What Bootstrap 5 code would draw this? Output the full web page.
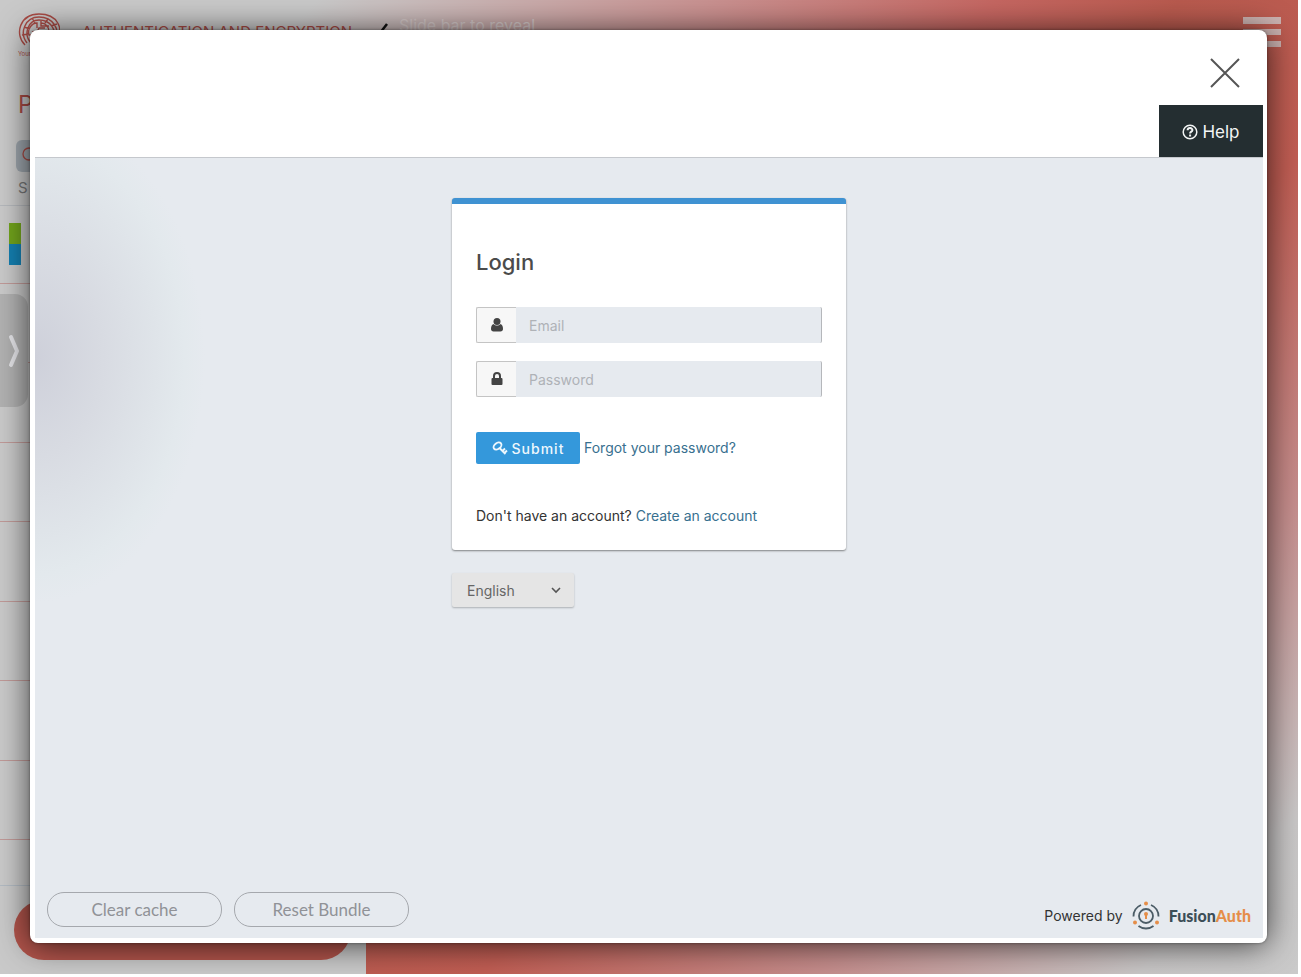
<!DOCTYPE html>
<html lang="en">
<head>
<meta charset="utf-8">
<meta name="viewport" content="width=device-width, initial-scale=1">
<title>Login</title>
<link href="https://cdn.jsdelivr.net/npm/bootstrap@5.3.0/dist/css/bootstrap.min.css" rel="stylesheet">
<style>
body { font-family: Inter, "Liberation Sans", sans-serif; font-size: 14px; line-height: 20px; color: #333; background: #fff; }
.app-shell { display: grid; min-height: 100vh; border: solid #fff; border-width: 0 3px 3px 0; overflow: hidden;
  background: linear-gradient(135deg, #c9c9c9 14%, #c98f8e 32%, #c56661 44%, #b85a4e 52%, #c05d53 64%, #c58d8c 79%, #c8c6c6 93%, #cacaca 100%); }
.app-shell > * { grid-area: 1 / 1; min-width: 0; }

/* Page behind the dialog */
.behind { display: flex; }
.side-panel { width: 366px; flex-shrink: 0; display: flex; flex-direction: column; }
.side-top { height: 206px; padding: 12px 0 0 18px; border-bottom: 1px solid #b5b8bc; }
.side-body { background: #c9c9c9; flex-grow: 1; }
.brand-red { color: #a94b45; }
.brand-mark { width: 42px; }
.tiny-text { font-size: 6px; line-height: 8px; }
.brand-title { font-size: 15px; line-height: 20px; margin: 10px 0 0 22px; }
.panel-heading { font-size: 24px; line-height: 30px; margin: 32px 0 20px; }
.search-stub { height: 32px; width: 300px; margin-left: -2px; border-radius: 6px; background: #9da5ac; padding: 5px 6px; }
.side-caption { font-size: 15px; color: #777; margin-top: 6px; }
.side-rows > div { height: 80px; border-bottom: 1px solid #c09a98; }
.side-rows > div:first-child { height: 78px; padding: 17px 0 0 9px; }
.side-rows > div:nth-child(even) { height: 79px; }
.side-rows > div:last-child { height: 46px; border-color: #b2bac2; }
.swatch { width: 12px; height: 42px; background: linear-gradient(#71a31c 50%, #147fb0 50%); }
.pill { height: 60px; margin: 14px 15px 14px 14px; border-radius: 30px; background: #b1544b; }
.stage-top { padding: 15px 17px 0 13px; height: 60px; color: #d6caca; font-size: 16px; }
.burger { width: 38px; height: 32px; }
.drawer-tab { align-self: start; width: 28px; height: 113px; margin-top: 294px; border: 0; border-radius: 0 13px 13px 0; background: #b1b1b1; z-index: 0; }

/* Dialog */
.login-window { z-index: 1; margin: 30px 31px 31px 30px; background: #fff; border-radius: 8px; padding: 0 4px 5px 5px;
  box-shadow: 0 2px 32px rgba(0,0,0,.7), 0 0 3px rgba(0,0,0,.4); }
.close-row { height: 75px; padding-right: 22px; padding-top: 10px; }
.plain-btn { border: 0; background: none; padding: 0; line-height: 0; }
.help-row { height: 53px; border-bottom: 1px solid #c5c8cd; }
.help-link { width: 104px; padding-top: 1px; background: #242e31; color: #f3f5f5; font-size: 17px; }
.login-stage { background: radial-gradient(ellipse 170px 245px at 0 200px, #ced0da 0%, #d8dbe2 40%, #e3e9ed 88%, #e6eaef 100%) #e6eaef; }
.login-column { width: 394px; max-width: 100%; margin: 40px auto 0; }
.login-card { border: 0; border-top: 6px solid #3f92d2; border-radius: 3px; padding: 43px 24px 24px; box-shadow: 0 1px 2px rgba(0,0,0,.45); }
.login-card h1 { font-size: 22px; line-height: 30px; font-weight: 500; color: #4b4b4b; margin-bottom: 30px; }
.field-row { height: 36px; margin-bottom: 18px; }
.field-row .input-group-text { width: 41px; padding: 0; justify-content: center; background: #f7f7f7; border: 1px solid #c4c4c4; border-right: 0; border-radius: 2px 0 0 2px; color: #444; }
.field-row .form-control { font-size: 14px; padding: 0 13px; background: #e6eaef; border: 0; border-right: 1px solid #b5b7bb; border-radius: 0 2px 2px 0; }
.field-row .form-control::placeholder { color: #afb2b7; }
.actions { margin: 35px 0 42px; }
.submit-btn { width: 104px; height: 32px; padding: 0; font-size: 14px; font-weight: 500; letter-spacing: 1px; background: #3498db; color: #eef7fd; border: 0; border-radius: 2px; }
.actions a, .signup a { color: #38708f; text-decoration: none; }
.lang-select { width: 122px; height: 34px; margin-top: 23px; padding: 0 15px; font-size: 14px; color: #666; background-color: #e5e5e5; border: 0; border-radius: 2px; box-shadow: 0 1px 2px rgba(0,0,0,.25);
  background-image: url("data:image/svg+xml,%3Csvg xmlns='http://www.w3.org/2000/svg' viewBox='0 0 12 12'%3E%3Cpath d='M2 4l4 4 4-4' fill='none' stroke='%23555' stroke-width='1.6'/%3E%3C/svg%3E"); background-size: 12px; background-position: right 12px center; }
.foot { padding: 0 12px 7px; }
.round-btn { width: 175px; height: 35px; margin-bottom: 4px; border: 1px solid #a5a8ad; border-radius: 17px; background: none; color: #909297; font: 17px Lato, sans-serif; }
.fusion-name { font: 900 16px/20px Lato, sans-serif; color: #3c4e57; }
.fusion-name span { color: #e58e49; }
</style>
</head>
<body>
<div class="app-shell">
  <div class="behind">
    <aside class="side-panel">
      <div class="side-top">
        <div class="d-flex brand-red">
          <div class="brand-mark">
            <svg class="d-block" width="42" height="38" viewBox="0 0 42 38" fill="none" stroke="currentColor" stroke-width="1.4"><path d="M7 33C-4 22 2 2 21 2s25 15 18 27M9 31C1 21 7 5 21 5s22 13 16 23M13 31C5 22 10 8 21 8s19 10 13 19M15 28v-5h-4c-2-6 3-12 8-12v5M23 8v6h8M23 11c5 0 8 4 8 9M14 20h5l2-4h6M18 31v-7c1-5 8-5 7 0M6 15l6 2M4 23l6-1M14 6l3 5M30 7l-3 4M33 14l6-2"/></svg>
            <div class="tiny-text">Your</div>
          </div>
          <div class="brand-title text-nowrap">AUTHENTICATION AND ENCRYPTION</div>
        </div>
        <div class="panel-heading brand-red">P</div>
        <div class="search-stub brand-red"><svg class="d-block" width="18" height="20" viewBox="0 0 18 20" fill="none" stroke="currentColor" stroke-width="1.3"><circle cx="7" cy="9" r="6"/><path d="M11 13l5 5"/></svg></div>
        <div class="side-caption">S</div>
      </div>
      <div class="side-body">
        <div class="side-rows">
          <div><div class="swatch"></div></div>
          <div></div><div></div><div></div><div></div><div></div><div></div><div></div><div></div>
        </div>
        <div class="pill"></div>
      </div>
    </aside>
    <div class="stage-top flex-grow-1 d-flex justify-content-between">
      <div class="d-flex gap-2">
        <svg width="12" height="22" viewBox="0 0 12 22"><path d="M8 9L1 18" stroke="#111" stroke-width="2.5"/></svg>
        <span>Slide bar to reveal</span>
      </div>
      <button class="plain-btn align-self-start" aria-label="Menu"><svg class="burger" viewBox="0 0 38 32"><path d="M0 2h38v7H0zM0 14h38v6H0zM0 26h38v6H0z" fill="#ccb3b1"/></svg></button>
    </div>
  </div>

  <button class="drawer-tab p-0" aria-label="Open drawer"><svg class="d-block ms-2" width="12" height="34" viewBox="0 0 12 34"><path d="M3 3l6 14-6 14" fill="none" stroke="#e4e4e8" stroke-width="4" stroke-linecap="round" stroke-linejoin="round"/></svg></button>

  <main class="login-window d-flex flex-column">
    <div class="close-row d-flex justify-content-end align-items-center">
      <button class="plain-btn" aria-label="Close"><svg width="32" height="32" viewBox="0 0 32 32"><path d="M2 2l28 28M30 2L2 30" stroke="#555" stroke-width="2"/></svg></button>
    </div>
    <div class="help-row d-flex justify-content-end">
      <a href="#" class="help-link d-flex align-items-center justify-content-center gap-1 text-decoration-none">
        <svg width="16" height="16" viewBox="0 0 16 16" fill="none" stroke="currentColor"><circle cx="8" cy="8" r="6.8" stroke-width="1.5"/><path d="M5.6 6.2c.2-3 5-2.700 4.800 0-.1 1.500-2.300 1.500-2.300 3.200M8.100 10.600v2" stroke-width="2"/></svg>Help</a>
    </div>
    <div class="login-stage flex-grow-1 d-flex flex-column">
      <div class="login-column">
        <form class="card login-card">
          <h1>Login</h1>
          <div class="input-group field-row">
            <label class="input-group-text" for="email" aria-label="Email"><svg width="14" height="16" viewBox="0 0 14 16" fill="currentColor"><circle cx="7" cy="4.500" r="3.500"/><path d="M3.500 7C1.500 7.500 1 10 1 12c0 1.500 1 2.500 2.500 2.500h7c1.500 0 2.500-1 2.500-2.500 0-2-.5-4.500-2.500-5-2 2-5 2-7 0z"/></svg></label>
            <input class="form-control" id="email" type="email" placeholder="Email">
          </div>
          <div class="input-group field-row mb-0">
            <label class="input-group-text" for="password" aria-label="Password"><svg width="14" height="16" viewBox="0 0 14 16"><path d="M4 8V5a3 3 0 0 1 6 0v3" fill="none" stroke="currentColor" stroke-width="2"/><rect x="1.500" y="7" width="11" height="7" rx="1" fill="currentColor"/></svg></label>
            <input class="form-control" id="password" type="password" placeholder="Password">
          </div>
          <div class="actions d-flex align-items-center gap-1">
            <button type="button" class="btn submit-btn d-flex align-items-center justify-content-center"><svg class="me-1" width="16" height="16" viewBox="0 0 16 16" fill="none" stroke="currentColor" stroke-width="1.900"><ellipse cx="5.500" cy="6" rx="4.400" ry="3" transform="rotate(-38 5.500 6)"/><path d="M7.500 8l6 6M10.500 11l2.500-2.500M12.500 13l2.500-2.500"/></svg>Submit</button>
            <a href="#">Forgot your password?</a>
          </div>
          <div class="signup">Don't have an account? <a href="#">Create an account</a></div>
        </form>
        <select class="form-select lang-select" aria-label="Language"><option>English</option></select>
      </div>
      <div class="foot mt-auto d-flex justify-content-between align-items-end">
        <div class="d-flex gap-2"><button class="round-btn me-1">Clear cache</button><button class="round-btn">Reset Bundle</button></div>
        <div class="d-flex align-items-center">Powered by
          <svg class="mx-2" width="30" height="30" viewBox="0 0 30 30" fill="none" stroke="#4b5c66" stroke-width="1.800"><path d="M2.500 15.500A12.500 12.500 0 0 1 10 4M20 4a12.500 12.500 0 0 1 7.500 11.500M7.500 25a12.500 12.500 0 0 0 15 0"/><circle cx="15" cy="15" r="7"/><path d="M15 12v6" stroke="#e58e49" stroke-width="2"/><g fill="#e58e49" stroke="none"><circle cx="15" cy="2.500" r="2"/><circle cx="4" cy="21.500" r="2"/><circle cx="26" cy="21.500" r="2"/><circle cx="15" cy="13" r="2"/></g></svg>
          <div class="fusion-name">Fusion<span>Auth</span></div>
        </div>
      </div>
    </div>
  </main>
</div>
<script src="https://cdn.jsdelivr.net/npm/bootstrap@5.3.0/dist/js/bootstrap.bundle.min.js"></script>
</body>
</html>
